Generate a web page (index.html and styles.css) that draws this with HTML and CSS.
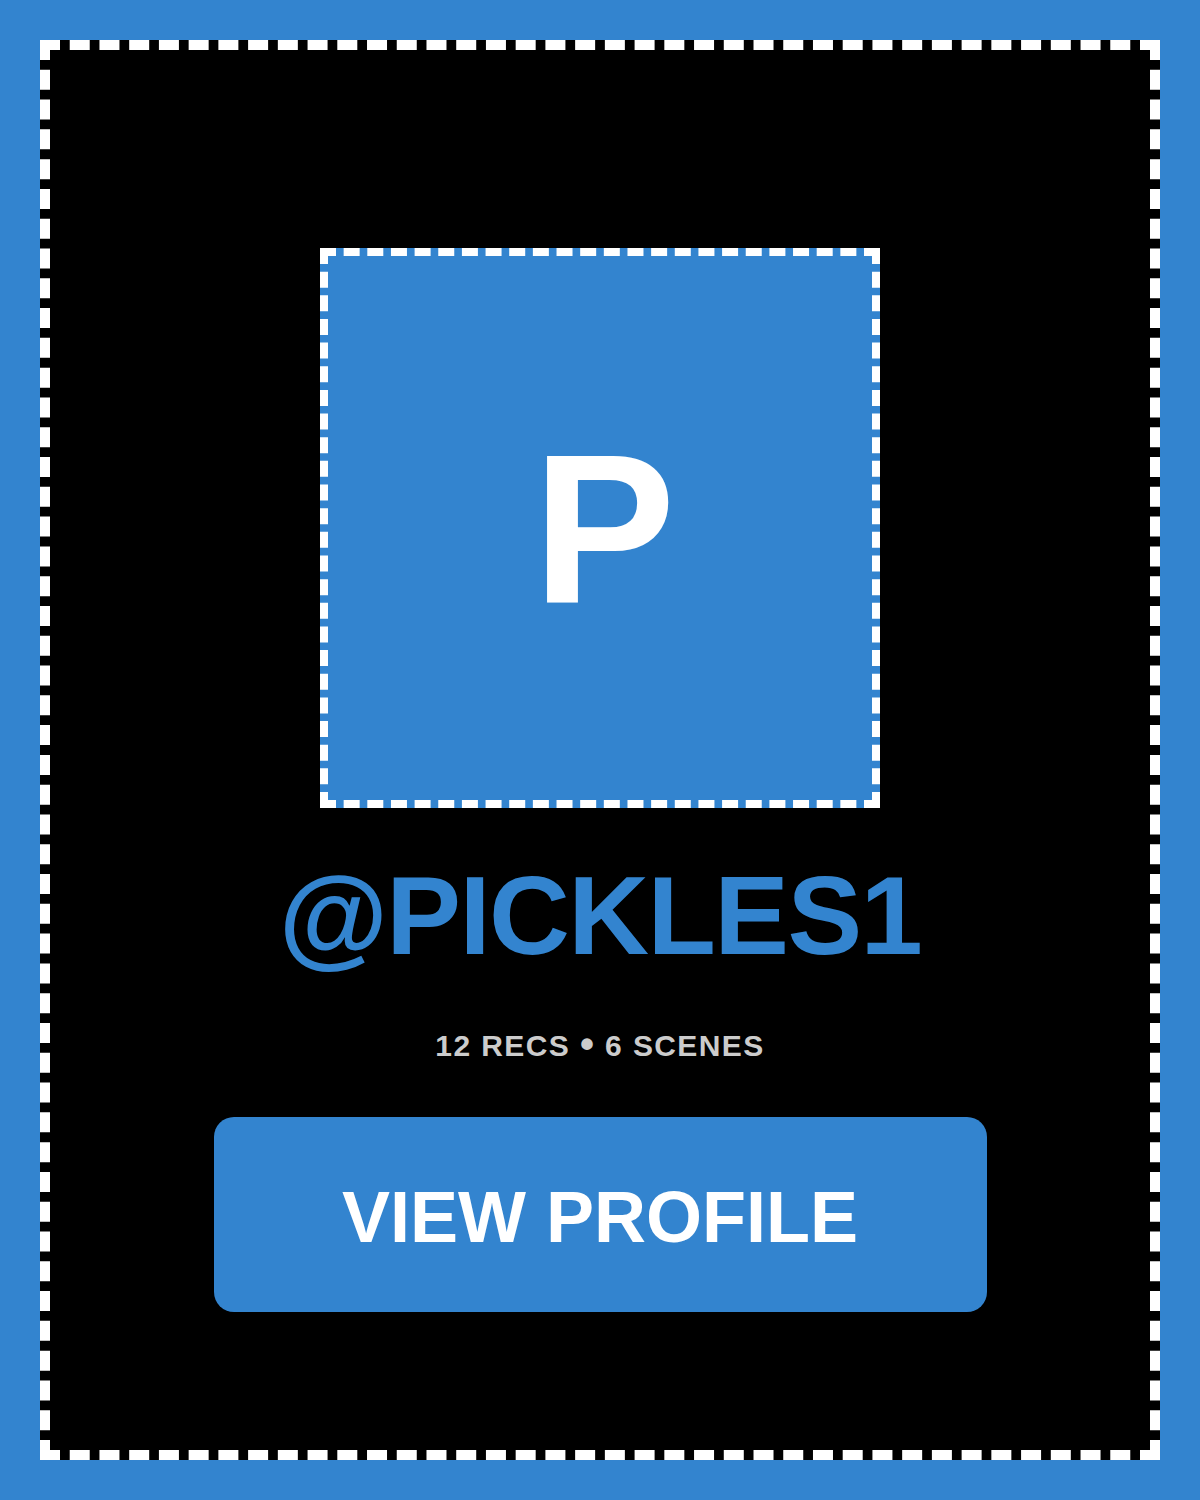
FILE: index.html
```html
<!DOCTYPE html>
<html lang="en">
<head>
<meta charset="utf-8">
<title>@PICKLES1</title>
<link rel="stylesheet" href="styles.css">
</head>
<body>
<main class="page">
  <section class="card">
    <div class="avatar"><span class="initial">P</span></div>
    <h1 class="handle">@PICKLES1</h1>
    <p class="stats">12 RECS <span class="dot">•</span> 6 SCENES</p>
    <a class="btn" href="#">VIEW PROFILE</a>
  </section>
</main>
</body>
</html>
```

FILE: styles.css
```css
* { box-sizing: border-box; }
html, body { margin: 0; padding: 0; }
body {
  background: #3384cf;
  font-family: "Liberation Sans", Arial, sans-serif;
}
.page {
  padding: 40px;
}
.card {
  height: 1420px;
  background: #000;
  border: 10px dashed #fff;
  display: flex;
  flex-direction: column;
  align-items: center;
  padding-top: 198px;
}
.avatar {
  width: 560px;
  height: 560px;
  background: #3384cf;
  border: 8px dashed #fff;
  display: flex;
  align-items: center;
  justify-content: center;
}
.initial {
  color: #fff;
  font-weight: 700;
  font-size: 214px;
  line-height: 1;
  margin-left: 8px;
  margin-top: 2px;
}
.handle {
  margin: 52px 0 0;
  color: #3384cf;
  font-weight: 700;
  font-size: 112px;
  line-height: 1;
  letter-spacing: -1.6px;
}
.stats {
  margin: 59px 0 0;
  color: #cccccc;
  font-weight: 700;
  font-size: 30px;
  line-height: 1;
  letter-spacing: 1.4px;
}
.dot {
  font-size: 40px;
  line-height: 0;
  vertical-align: -2px;
}
.btn {
  margin-top: 56px;
  width: 773px;
  height: 195px;
  border-radius: 20px;
  background: #3384cf;
  color: #fff;
  text-decoration: none;
  font-weight: 700;
  font-size: 72px;
  display: flex;
  align-items: center;
  justify-content: center;
  padding-top: 4px;
}
```
